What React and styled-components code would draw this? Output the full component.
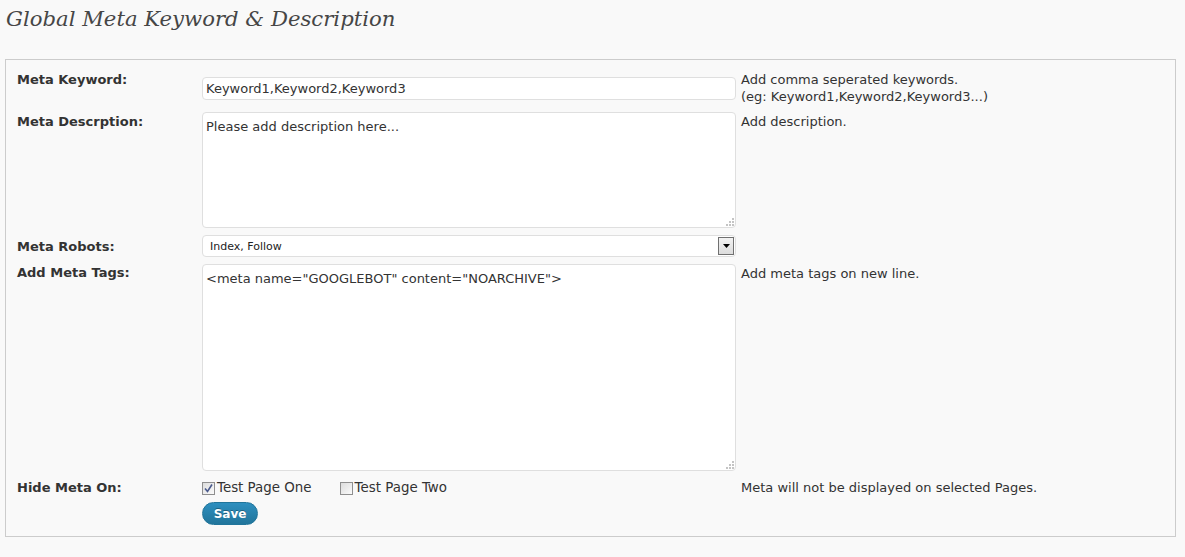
import React from 'react';
import styled, {createGlobalStyle} from 'styled-components';

const GlobalStyle = createGlobalStyle`
    html, body {
        margin: 0;
        padding: 0;
        background: #f9f9f9;
    }
    body {
        font-family: "DejaVu Sans", Verdana, sans-serif;
        color: #333;
    }
`;

const Page = styled.div`
    width: 1185px;
    height: 557px;
    overflow: hidden;
    background: #f9f9f9;
`;

const Title = styled.h2`
    margin: 0;
    padding: 4px 0 0 6px;
    height: 55px;
    box-sizing: border-box;
    font-family: Georgia, "DejaVu Serif", serif;
    font-style: italic;
    font-weight: normal;
    font-size: 21.2px;
    line-height: 30px;
    color: #464646;
`;

const Box = styled.div`
    margin: 4px 0 0 5px;
    width: 1171px;
    height: 478px;
    box-sizing: border-box;
    border: 1px solid #ccc;
    padding: 11px 0 0 11px;
    display: flex;
    flex-direction: column;
    gap: 7px;
`;

const Row = styled.div`
    display: grid;
    grid-template-columns: 185px 539px 1fr;
    align-items: start;
    margin-top: ${p => p.$mt || 0}px;
`;

const Label = styled.label`
    font-size: 13px;
    font-weight: bold;
    line-height: 16px;
    color: #333;
    margin-top: ${p => p.$mt || 0}px;
`;

const Hint = styled.div`
    font-size: 13px;
    line-height: 17px;
    color: #333;
    margin-top: ${p => p.$mt || 0}px;
`;

const TextInput = styled.input`
    display: block;
    width: 534px;
    height: 23px;
    box-sizing: border-box;
    margin-top: ${p => p.$mt || 0}px;
    padding: 0 3px;
    border: 1px solid #dfdfdf;
    border-radius: 4px;
    background: #fff;
    font-family: "DejaVu Sans", Verdana, sans-serif;
    font-size: 13px;
    color: #333;
    outline: none;
`;

const AreaWrap = styled.div`
    position: relative;
    width: 534px;
    height: ${p => p.$h}px;
`;

const TextArea = styled.textarea`
    display: block;
    width: 100%;
    height: 100%;
    box-sizing: border-box;
    padding: 6px 3px;
    border: 1px solid #dfdfdf;
    border-radius: 4px;
    background: #fff;
    resize: none;
    font-family: "DejaVu Sans", Verdana, sans-serif;
    font-size: 13px;
    line-height: 16px;
    color: #333;
    outline: none;
`;

const Grip = styled.svg`
    position: absolute;
    right: 2px;
    bottom: 2px;
`;

const SelectBox = styled.div`
    width: 534px;
    height: 22px;
    box-sizing: border-box;
    border: 1px solid #dfdfdf;
    border-radius: 4px;
    background: #fff;
    display: flex;
    align-items: center;
    justify-content: space-between;
    padding: 0 1px 0 7px;
    font-size: 11px;
    color: #222;
`;

const SelectArrow = styled.span`
    width: 16px;
    height: 18px;
    box-sizing: border-box;
    border: 1px solid #707070;
    background: linear-gradient(#f2f2f2, #dcdcdc);
    display: flex;
    align-items: center;
    justify-content: center;
`;

const Checks = styled.div`
    display: flex;
    align-items: center;
    gap: 28px;
    margin-top: 1px;
    font-size: 13.4px;
    line-height: 16px;
    color: #333;
`;

const CheckItem = styled.label`
    display: flex;
    align-items: center;
`;

const CheckBox = styled.span`
    width: 13px;
    height: 13px;
    box-sizing: border-box;
    margin-right: 2px;
    border: 1px solid #8f8f8f;
    background: linear-gradient(135deg, #dcdcdc, #fbfbfb);
    display: flex;
    align-items: center;
    justify-content: center;
`;

const SaveButton = styled.button`
    display: block;
    margin-top: 6px;
    width: 56px;
    height: 23px;
    border: 1px solid #21759b;
    border-radius: 12px;
    background: linear-gradient(#2e8fbf, #21759b);
    color: #fff;
    font-family: "DejaVu Sans", Verdana, sans-serif;
    font-size: 12px;
    font-weight: bold;
    padding: 0;
    text-shadow: 0 -1px 0 rgba(0, 0, 0, 0.3);
`;

const ResizeGrip = () => (
    <Grip width="9" height="9" viewBox="0 0 9 9">
        {[[7, 1], [4, 4], [7, 4], [1, 7], [4, 7], [7, 7]].map(([x, y]) => (
            <rect key={`${x}-${y}`} x={x} y={y} width="2" height="2" fill="#c4c4c4"/>
        ))}
    </Grip>
);

const Check = ({checked, label}) => (
    <CheckItem>
        <CheckBox>
            {checked ? (
                <svg width="9" height="9" viewBox="0 0 9 9">
                    <path d="M1 4.5 L3.5 7.5 L8 0.5" fill="none" stroke="#4a5a8c" strokeWidth="1.6"/>
                </svg>
            ) : null}
        </CheckBox>
        {label}
    </CheckItem>
);

export default function App() {
    return (
        <Page>
            <GlobalStyle/>
            <Title>Global Meta Keyword &amp; Description</Title>
            <Box>
                <Row>
                    <Label $mt={1}>Meta Keyword:</Label>
                    <TextInput $mt={6} defaultValue="Keyword1,Keyword2,Keyword3"/>
                    <Hint>
                        Add comma seperated keywords.<br/>
                        (eg: Keyword1,Keyword2,Keyword3...)
                    </Hint>
                </Row>
                <Row>
                    <Label $mt={2}>Meta Descrption:</Label>
                    <AreaWrap $h={116}>
                        <TextArea defaultValue="Please add description here..."/>
                        <ResizeGrip/>
                    </AreaWrap>
                    <Hint $mt={1}>Add description.</Hint>
                </Row>
                <Row>
                    <Label $mt={4}>Meta Robots:</Label>
                    <SelectBox>
                        <span>Index, Follow</span>
                        <SelectArrow>
                            <svg width="7" height="4" viewBox="0 0 7 4">
                                <path d="M0 0 H7 L3.5 4 Z" fill="#000"/>
                            </svg>
                        </SelectArrow>
                    </SelectBox>
                    <span/>
                </Row>
                <Row>
                    <Label $mt={1}>Add Meta Tags:</Label>
                    <AreaWrap $h={207}>
                        <TextArea defaultValue={'<meta name="GOOGLEBOT" content="NOARCHIVE">'}/>
                        <ResizeGrip/>
                    </AreaWrap>
                    <Hint $mt={1}>Add meta tags on new line.</Hint>
                </Row>
                <Row $mt={1}>
                    <Label $mt={1}>Hide Meta On:</Label>
                    <div>
                        <Checks>
                            <Check checked label="Test Page One"/>
                            <Check label="Test Page Two"/>
                        </Checks>
                        <SaveButton>Save</SaveButton>
                    </div>
                    <Hint>Meta will not be displayed on selected Pages.</Hint>
                </Row>
            </Box>
        </Page>
    );
}
